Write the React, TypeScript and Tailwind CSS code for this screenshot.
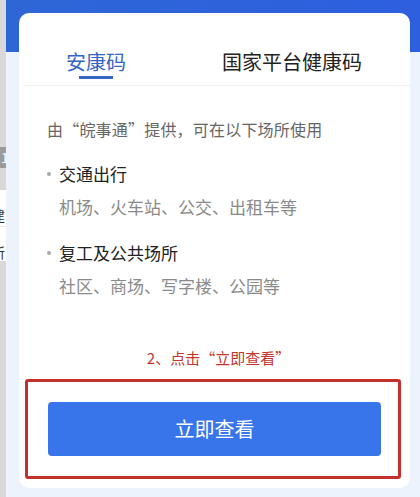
import React from "react";

const places = [
  { title: "交通出行", detail: "机场、火车站、公交、出租车等" },
  { title: "复工及公共场所", detail: "社区、商场、写字楼、公园等" },
];

function SideStrip() {
  return (
    <div className="w-[6px] shrink-0 bg-[#d9d9d9] flex flex-col overflow-hidden">
      <div className="mt-[147px] h-[21px] bg-[#9b9b9b] text-white text-[14px] leading-[21px] pl-[1px] overflow-hidden">
        1
      </div>
      <div className="mt-[22px] h-[37px] bg-white border-b border-[#e4e4e4] text-[14px] leading-[50px] text-[#333] overflow-hidden">
        <span className="block -ml-[9px]">建</span>
      </div>
      <div className="h-[34px] bg-white text-[14px] leading-[50px] text-[#333] overflow-hidden">
        <span className="block -ml-[9px]">所</span>
      </div>
    </div>
  );
}

export default function App() {
  return (
    <div className="w-[420px] h-[497px] flex overflow-hidden bg-[#edf3fc] font-['Noto_Sans_CJK_SC','Noto_Sans',sans-serif]">
      <SideStrip />
      <div className="flex-1 pl-[13px] pt-[13px] bg-[linear-gradient(to_bottom,transparent_52px,#edf3fc_52px),linear-gradient(to_right,#2e66d6,#2d5fdf)]">
        <div className="w-[391px] h-[475px] bg-white rounded-[10px] flex flex-col">
          <div className="flex pl-[47px] pt-[37px]">
            <div className="w-[60px] flex flex-col items-center">
              <span className="text-[20px] leading-[24px] text-[#3566c4] whitespace-nowrap">安康码</span>
              <span className="mt-[2px] w-[34px] h-[3px] bg-[#3566c4]" />
            </div>
            <span className="ml-[96px] text-[20px] leading-[24px] text-[#222] whitespace-nowrap">
              国家平台健康码
            </span>
          </div>
          <div className="mt-[6px] ml-[5px] h-px bg-[#f0f0f0]" />

          <div className="pl-[28px]">
            <p className="mt-[31px] text-[16px] leading-[24px] text-[#666] whitespace-nowrap tracking-[0.2px]">
              由“皖事通”提供，可在以下场所使用
            </p>
            {places.map((p, i) => (
              <div key={p.title} className={i === 0 ? "mt-[21px]" : "mt-[22px]"}>
                <div className="flex items-center">
                  <span className="w-[12px] flex">
                    <span className="w-[4px] h-[4px] rounded-full bg-[#a8a8a8]" />
                  </span>
                  <span className="text-[17px] leading-[24px] text-[#222]">{p.title}</span>
                </div>
                <p className="mt-[9px] pl-[12px] text-[17px] leading-[24px] text-[#8a8a8a] whitespace-nowrap">
                  {p.detail}
                </p>
              </div>
            ))}
          </div>

          <p className="mt-auto pl-[8px] text-center text-[15px] leading-[20px] text-[#c3362e]">
            2、点击“立即查看”
          </p>
          <div className="mt-[11px] mb-[9px] ml-[6px] w-[376px] h-[100px] border-[3px] border-[#c4302b] rounded-[3px] pl-[20px] pt-[20px]">
            <button className="w-[333px] h-[54px] rounded-[4px] bg-[#3875ea] text-white text-[20px] leading-[54px]">
              立即查看
            </button>
          </div>
        </div>
      </div>
    </div>
  );
}
